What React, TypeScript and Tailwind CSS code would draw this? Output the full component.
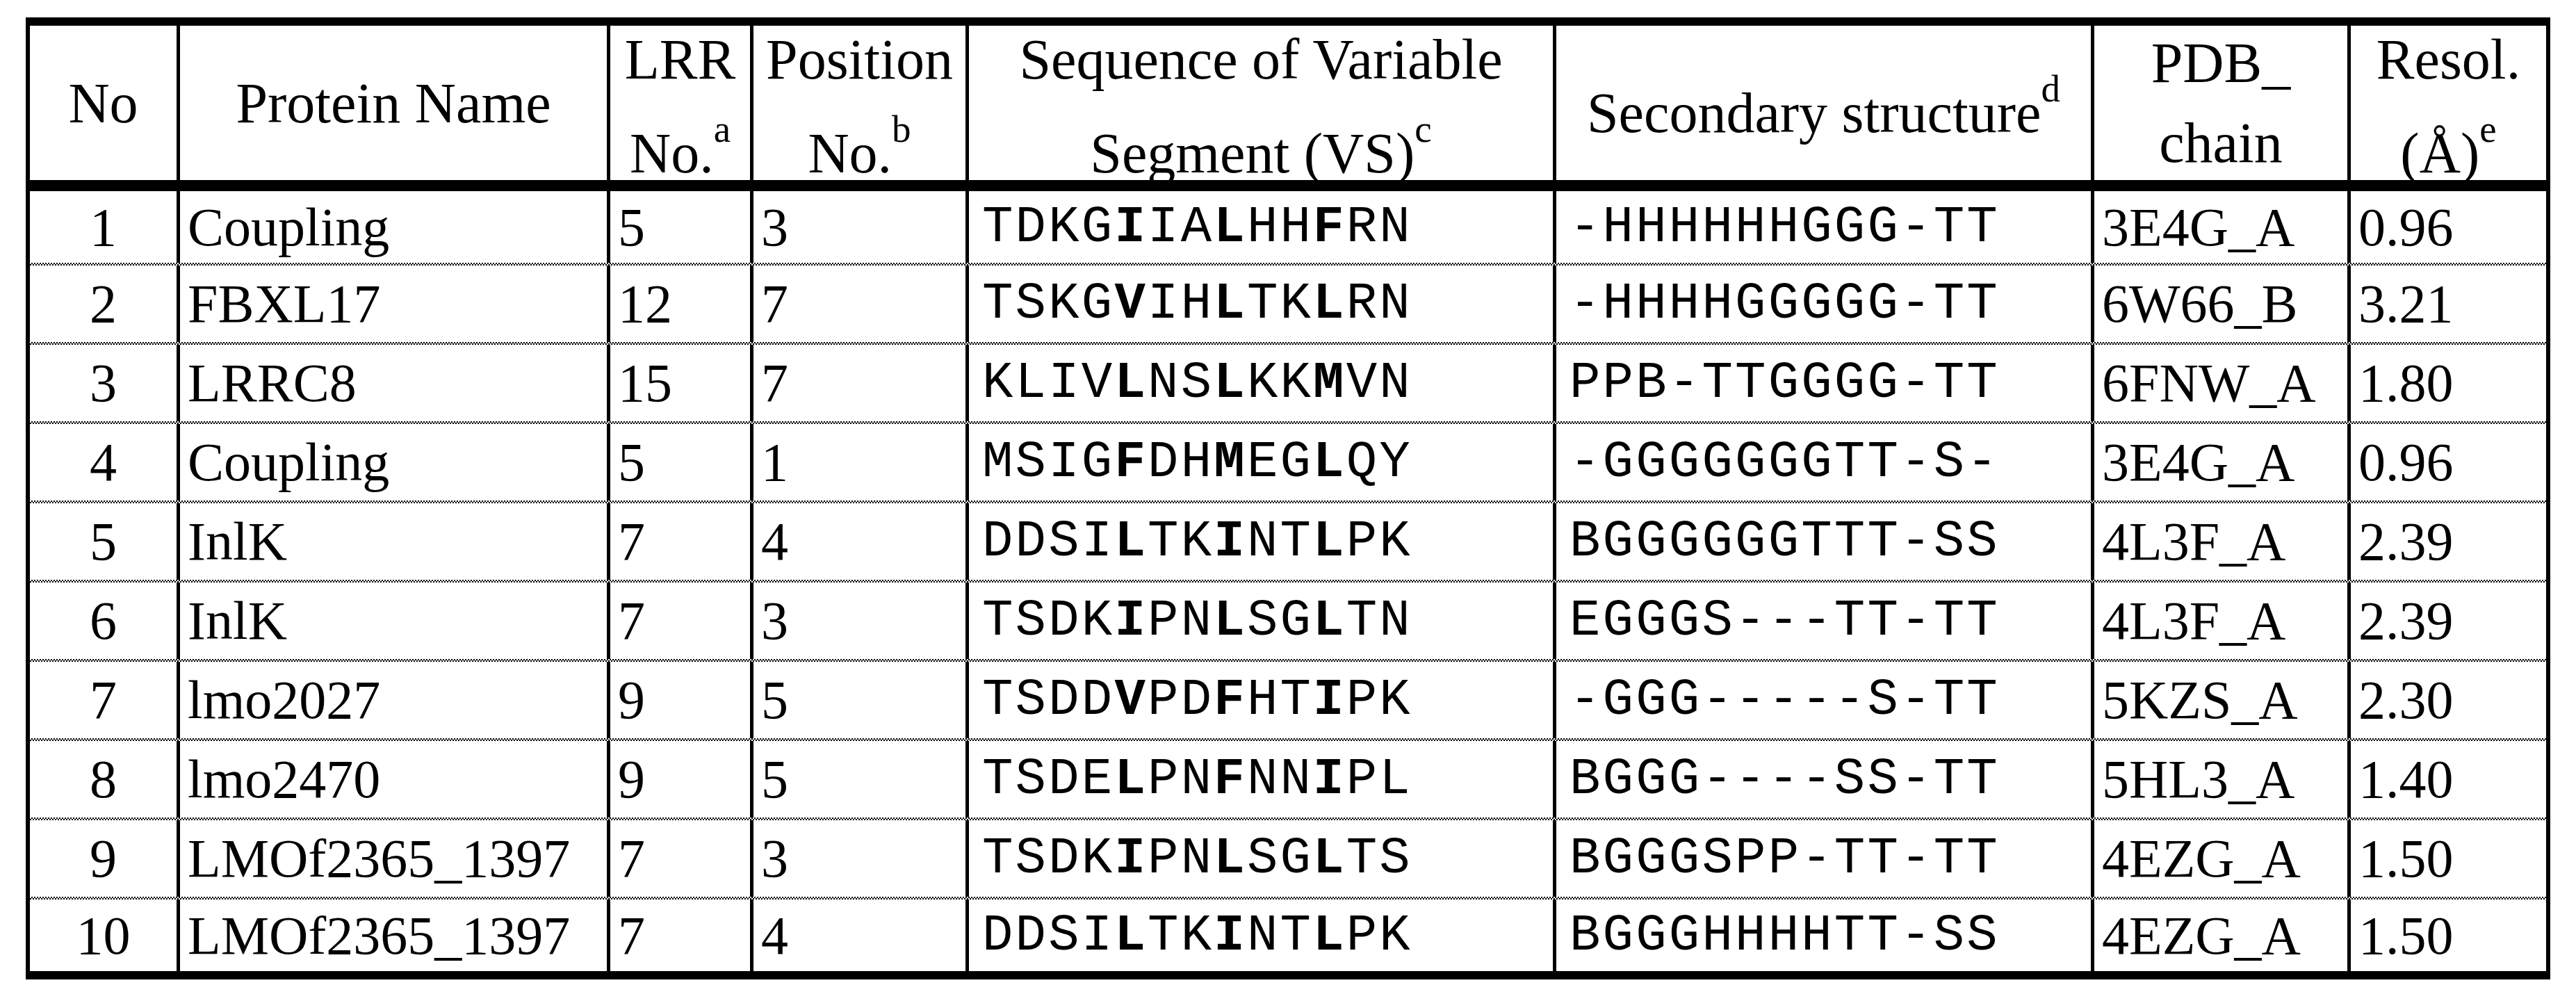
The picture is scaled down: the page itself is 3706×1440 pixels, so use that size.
import React, { ReactNode } from "react";

type rowProps = {
  no: number;
  name: string;
  lrr: string;
  pos: string;
  seq: string;
  ss: string;
  pdb: string;
  res: string;
};

const rows: rowProps[] = [
  { no: 1, name: "Coupling", lrr: "5", pos: "3", seq: "TDKGIIALHHFRN", ss: "-HHHHHHGGG-TT", pdb: "3E4G_A", res: "0.96" },
  { no: 2, name: "FBXL17", lrr: "12", pos: "7", seq: "TSKGVIHLTKLRN", ss: "-HHHHGGGGG-TT", pdb: "6W66_B", res: "3.21" },
  { no: 3, name: "LRRC8", lrr: "15", pos: "7", seq: "KLIVLNSLKKMVN", ss: "PPB-TTGGGG-TT", pdb: "6FNW_A", res: "1.80" },
  { no: 4, name: "Coupling", lrr: "5", pos: "1", seq: "MSIGFDHMEGLQY", ss: "-GGGGGGGTT-S-", pdb: "3E4G_A", res: "0.96" },
  { no: 5, name: "InlK", lrr: "7", pos: "4", seq: "DDSILTKINTLPK", ss: "BGGGGGGTTT-SS", pdb: "4L3F_A", res: "2.39" },
  { no: 6, name: "InlK", lrr: "7", pos: "3", seq: "TSDKIPNLSGLTN", ss: "EGGGS---TT-TT", pdb: "4L3F_A", res: "2.39" },
  { no: 7, name: "lmo2027", lrr: "9", pos: "5", seq: "TSDDVPDFHTIPK", ss: "-GGG-----S-TT", pdb: "5KZS_A", res: "2.30" },
  { no: 8, name: "lmo2470", lrr: "9", pos: "5", seq: "TSDELPNFNNIPL", ss: "BGGG----SS-TT", pdb: "5HL3_A", res: "1.40" },
  { no: 9, name: "LMOf2365_1397", lrr: "7", pos: "3", seq: "TSDKIPNLSGLTS", ss: "BGGGSPP-TT-TT", pdb: "4EZG_A", res: "1.50" },
  { no: 10, name: "LMOf2365_1397", lrr: "7", pos: "4", seq: "DDSILTKINTLPK", ss: "BGGGHHHHTT-SS", pdb: "4EZG_A", res: "1.50" },
];

const cols = "grid grid-cols-[211px_619px_206px_310px_845px_774px_369px_286px]";
const mono = "font-['Liberation_Mono','Courier_New',monospace] text-[74px] tracking-[3.2px]";

const Sup = ({ children }: { children: ReactNode }) => (
  <span className="relative -top-[44px] text-[55px] leading-none">{children}</span>
);

// residues 5, 8 and 11 are the conserved ones, set in bold
const Seq = ({ text }: { text: string }) => (
  <span className="whitespace-pre">
    {text.split("").map((ch, i) =>
      i === 4 || i === 7 || i === 10 ? (
        <b key={i} className="font-bold">
          {ch}
        </b>
      ) : (
        <span key={i}>{ch}</span>
      )
    )}
  </span>
);

export default function App() {
  return (
    <div className="w-[3706px] min-h-[1440px] bg-white pt-[25px] pl-[37px] text-black font-['Liberation_Serif','Times_New_Roman',serif]">
      <div className="w-[3632px] border-x-[6px] border-y-[12px] border-black">
        {/* head */}
        <div className={`${cols} grid-rows-[222px] h-[238px] border-b-[16px] border-black text-[82px] whitespace-nowrap`}>
          <div className="flex flex-col items-center justify-center min-h-0">
            <div className="leading-[115px]">No</div>
          </div>
          <div className="flex flex-col items-center justify-center min-h-0 border-l-[5px] border-black">
            <div className="leading-[115px]">Protein Name</div>
          </div>
          <div className="flex flex-col items-center justify-center min-h-0 border-l-[5px] border-black pt-[10px]">
            <div className="leading-[135px]">LRR</div>
            <div className="leading-[135px]">
              No.<Sup>a</Sup>
            </div>
          </div>
          <div className="flex flex-col items-center justify-center min-h-0 border-l-[5px] border-black pt-[10px]">
            <div className="leading-[135px]">Position</div>
            <div className="leading-[135px]">
              No.<Sup>b</Sup>
            </div>
          </div>
          <div className="flex flex-col items-center justify-center min-h-0 border-l-[5px] border-black pt-[10px]">
            <div className="leading-[135px]">Sequence of Variable</div>
            <div className="leading-[135px]">
              Segment (VS)<Sup>c</Sup>
            </div>
          </div>
          <div className="flex flex-col items-center justify-center min-h-0 border-l-[5px] border-black pt-[28px]">
            <div className="leading-[115px]">
              Secondary structure<Sup>d</Sup>
            </div>
          </div>
          <div className="flex flex-col items-center justify-center min-h-0 border-l-[5px] border-black">
            <div className="leading-[115px]">PDB_</div>
            <div className="leading-[115px]">chain</div>
          </div>
          <div className="flex flex-col items-center justify-center min-h-0 border-l-[5px] border-black pt-[10px]">
            <div className="leading-[135px]">Resol.</div>
            <div className="leading-[135px]">
              (Å)<Sup>e</Sup>
            </div>
          </div>
        </div>

        {/* body */}
        {rows.map((row, index) => {
          const last = index === rows.length - 1;
          const height = index === 0 ? "h-[107px]" : last ? "h-[103px]" : "h-[114px]";
          const dotted = last
            ? ""
            : "pb-[4px] bg-[image:conic-gradient(#000_25%,transparent_0_50%,#000_0_75%,transparent_0)] bg-[length:4px_4px] bg-bottom bg-repeat-x";
          return (
            <div key={index} className={`${cols} ${height} ${dotted} text-[78px] leading-none whitespace-nowrap`}>
              <div className="flex items-center justify-center">{row.no}</div>
              <div className="flex items-center border-l-[5px] border-black pl-[11px]">{row.name}</div>
              <div className="flex items-center border-l-[5px] border-black pl-[11px]">{row.lrr}</div>
              <div className="flex items-center border-l-[5px] border-black pl-[11px]">{row.pos}</div>
              <div className={`flex items-center border-l-[5px] border-black pl-[19px] ${mono}`}>
                <Seq text={row.seq} />
              </div>
              <div className={`flex items-center border-l-[5px] border-black pl-[19px] whitespace-pre ${mono}`}>
                {row.ss}
              </div>
              <div className="flex items-center border-l-[5px] border-black pl-[11px]">{row.pdb}</div>
              <div className="flex items-center border-l-[5px] border-black pl-[11px]">{row.res}</div>
            </div>
          );
        })}
      </div>
    </div>
  );
}
